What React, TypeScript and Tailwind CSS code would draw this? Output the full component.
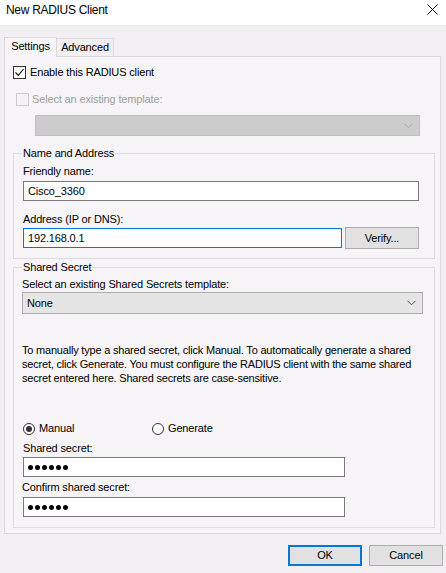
import React from "react";

const Chevron = ({ color }: { color: string }) => (
  <svg width="9" height="6" viewBox="0 0 9 6" fill="none">
    <path d="M0.5 0.8 L4.5 4.8 L8.5 0.8" stroke={color} strokeWidth="1" />
  </svg>
);

const Dots = () => (
  <div className="flex gap-[2px] items-center">
    {[0, 1, 2, 3, 4, 5].map((i) => (
      <div key={i} className="w-[5px] h-[5px] rounded-full bg-black" />
    ))}
  </div>
);

export default function App() {
  return (
    <div
      className="w-[446px] h-[573px] bg-[#f1eff1] text-black text-[11px] leading-[13px] tracking-[-0.15px] overflow-hidden"
      style={{ fontFamily: '"Liberation Sans", Arial, sans-serif' }}
    >
      {/* Title bar */}
      <div className="h-[25px] bg-white flex items-center justify-between pl-[6px] pr-[8px]">
        <span className="text-[12px] leading-[14px] tracking-[-0.3px] -mt-[5px]">New RADIUS Client</span>
        <svg width="11" height="11" viewBox="0 0 11 11" className="-mt-[6px]">
          <path d="M0.5 0.5 L10.5 10.5 M10.5 0.5 L0.5 10.5" stroke="#111" strokeWidth="1" />
        </svg>
      </div>

      {/* Tabs */}
      <div className="flex items-end pl-[4px] pt-[12px] relative z-10">
        <div className="w-[53px] h-[20px] border border-b-0 border-[#d9d9d9] bg-[#f6f4f6] flex items-center justify-center mb-[-1px] pb-[2px]">
          Settings
        </div>
        <div className="w-[57px] h-[18px] border border-l-0 border-b-0 border-[#d9d9d9] bg-[#f1eff1] flex items-center justify-center">
          Advanced
        </div>
      </div>

      {/* Panel */}
      <div className="ml-[4px] w-[437px] h-[478px] border border-[#d9d9d9] bg-[#f6f4f6]">
        {/* enable */}
        <div className="mt-[9px] ml-[8px] flex items-center gap-[4px] h-[13px]">
          <div className="w-[13px] h-[13px] border border-[#333] bg-white flex items-center justify-center">
            <svg width="11" height="11" viewBox="0 0 11 11">
              <path d="M1.5 5.5 L4.3 8.4 L9.6 2" stroke="#111" strokeWidth="1.1" fill="none" />
            </svg>
          </div>
          <span>Enable this RADIUS client</span>
        </div>
        {/* template */}
        <div className="mt-[14px] ml-[11px] flex items-center gap-[3px] h-[13px] text-[#a0a0a0]">
          <div className="w-[13px] h-[13px] border border-[#cccccc] bg-[#f3f1f3]" />
          <span>Select an existing template:</span>
        </div>
        <div className="mt-[9px] ml-[30px] w-[385px] h-[21px] bg-[#cccccc] border border-[#bfbfbf] flex items-center justify-end pr-[6px]">
          <Chevron color="#a8a8a8" />
        </div>

        {/* Name and Address */}
        <div className="mt-[17px] ml-[8px] w-[422px] border border-[#dcdcdc] pl-[8px] pb-[9px]">
          <div className="-mt-[7px] w-fit px-[1px] bg-[#f6f4f6]">Name and Address</div>
          <div className="mt-[5px] pl-[1px]">Friendly name:</div>
          <div className="mt-[3px] ml-[1px] w-[396px] h-[20px] bg-white border border-[#7a7a7a] flex items-center pl-[4px]">
            Cisco_3360
          </div>
          <div className="mt-[12px] pl-[1px]">Address (IP or DNS):</div>
          <div className="mt-[1px] ml-[1px] flex items-center gap-[3px] h-[22px]">
            <div className="w-[319px] h-[20px] bg-white border border-[#0078d7] flex items-center pl-[4px]">
              192.168.0.1
            </div>
            <div className="w-[74px] h-[22px] bg-[#e1e1e1] border border-[#adadad] flex items-center justify-center">
              Verify...
            </div>
          </div>
        </div>

        {/* Shared Secret */}
        <div className="mt-[8px] ml-[8px] w-[422px] border border-[#dcdcdc] pl-[8px] pb-[10px]">
          <div className="-mt-[7px] w-fit px-[1px] bg-[#f6f4f6]">Shared Secret</div>
          <div className="mt-[4px]">Select an existing Shared Secrets template:</div>
          <div className="mt-[1px] w-[401px] h-[22px] bg-[#e5e5e5] border border-[#adadad] flex items-center justify-between pl-[4px] pr-[6px]">
            <span>None</span>
            <Chevron color="#555" />
          </div>
          <p className="mt-[29px] leading-[14px] w-[402px] tracking-[-0.2px]">
            To manually type a shared secret, click Manual. To automatically generate a shared secret, click Generate. You must configure the RADIUS client with the same shared secret entered here. Shared secrets are case-sensitive.
          </p>
          <div className="mt-[37px] ml-[1px] flex items-center h-[13px]">
            <div className="w-[129px] flex items-center gap-[4px]">
              <div className="w-[12px] h-[12px] rounded-full border border-[#333] bg-white flex items-center justify-center">
                <div className="w-[6px] h-[6px] rounded-full bg-[#333]" />
              </div>
              <span>Manual</span>
            </div>
            <div className="flex items-center gap-[4px]">
              <div className="w-[12px] h-[12px] rounded-full border border-[#333] bg-white" />
              <span>Generate</span>
            </div>
          </div>
          <div className="mt-[7px] pl-[1px]">Shared secret:</div>
          <div className="mt-[2px] ml-[1px] w-[322px] h-[20px] bg-white border border-[#7a7a7a] flex items-center pl-[4px]">
            <Dots />
          </div>
          <div className="mt-[4px]">Confirm shared secret:</div>
          <div className="mt-[3px] ml-[1px] w-[322px] h-[20px] bg-white border border-[#7a7a7a] flex items-center pl-[4px]">
            <Dots />
          </div>
        </div>
      </div>

      {/* Buttons */}
      <div className="mt-[11px] flex justify-end gap-[7px] pr-[3px]">
        <div className="w-[74px] h-[21px] bg-[#e1e1e1] border-2 border-[#0078d7] flex items-center justify-center">OK</div>
        <div className="w-[74px] h-[21px] bg-[#e1e1e1] border border-[#adadad] flex items-center justify-center">Cancel</div>
      </div>
    </div>
  );
}
